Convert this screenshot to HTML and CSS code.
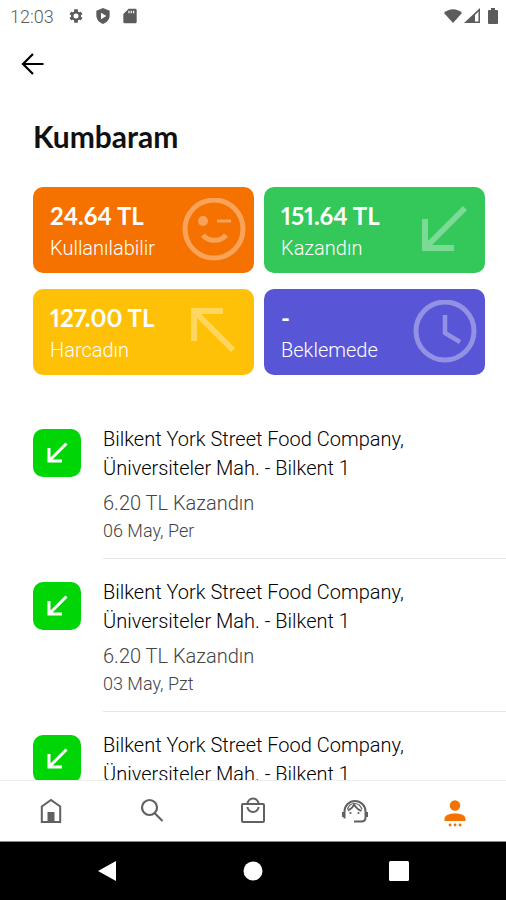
FILE: index.html
```html
<!DOCTYPE html>
<html lang="tr">
<head>
<meta charset="utf-8">
<meta name="viewport" content="width=device-width, initial-scale=1">
<title>Kumbaram</title>
<link rel="stylesheet" href="styles.css">
</head>
<body>
<svg class="sprite">
  <symbol id="arrow-in" viewBox="0 0 24 24"><path d="M21.500 2.500 4 20M4 7v13h13" fill="none" stroke="currentColor" stroke-width="3"/></symbol>
</svg>
<div class="screen">
  <div class="status">
    <span class="time">12:03</span>
    <svg class="status-icon" viewBox="0 0 24 24"><path fill="currentColor" fill-rule="evenodd" d="M19.400 13c.1-.7.1-1.300 0-2l2.200-1.700-2.200-3.800-2.600 1c-.5-.4-1.100-.7-1.700-1L14.700 2H9.300l-.4 3.500c-.6.300-1.200.6-1.700 1l-2.600-1-2.200 3.800L4.600 11c-.1.700-.1 1.300 0 2l-2.200 1.700 2.200 3.800 2.600-1c.5.4 1.100.7 1.700 1l.4 3.500h5.400l.4-3.500c.6-.3 1.200-.6 1.700-1l2.600 1 2.200-3.800zM12 15.800a3.800 3.800 0 1 1 0-7.600 3.800 3.800 0 0 1 0 7.600z"/></svg>
    <svg class="status-icon" viewBox="0 0 24 24"><path fill="currentColor" fill-rule="evenodd" d="M12 0 2 4V11c0 6 4 11 10 13 6-2 10-7 10-13V4zM9 7l8 5-8 5z"/></svg>
    <svg class="status-icon" viewBox="0 0 24 24"><path fill="currentColor" fill-rule="evenodd" d="M10 1h10a2 2 0 0 1 2 2v18a2 2 0 0 1-2 2H4a2 2 0 0 1-2-2V9zM9.500 4v4h1.800V4zM13 4v4h1.800V4zM16.500 4v4h1.800V4z"/></svg>
    <span class="spacer"></span>
    <svg class="wifi" viewBox="0 0 20 16"><path fill="currentColor" d="M1 5C6 0 14 0 19 5L10 15z"/></svg>
    <svg class="signal" viewBox="0 0 16 16"><path fill="currentColor" fill-rule="evenodd" d="M0 15 16 0v15zM11 7v6.500h3.500V3.500z"/></svg>
    <svg class="battery" viewBox="0 0 10 16"><path fill="currentColor" d="M3 0h4v2h2a1 1 0 0 1 1 1v12a1 1 0 0 1-1 1H1a1 1 0 0 1-1-1V3a1 1 0 0 1 1-1h2z"/></svg>
  </div>
  <main class="content">
    <button class="back" aria-label="Geri">
      <svg viewBox="0 0 24 24"><path d="M22.500 12H2.500M12 2 2 12l10 10" fill="none" stroke="currentColor" stroke-width="2.200"/></svg>
    </button>
    <h1>Kumbaram</h1>
    <section class="cards">
      <article class="card available">
        <div><strong>24.64 TL</strong><span>Kullanılabilir</span></div>
        <svg viewBox="0 0 64 64"><g fill="none" stroke="currentColor" stroke-width="5"><circle cx="32" cy="31" r="29"/><path d="M35 23h14" stroke-width="3"/><path d="M21 37c5 7 18 7 23 0"/></g><circle cx="21" cy="23" r="5" fill="currentColor"/></svg>
      </article>
      <article class="card earned">
        <div><strong>151.64 TL</strong><span>Kazandın</span></div>
        <svg viewBox="0 0 64 64"><path d="M52 10 13 49M12 21v29h29" fill="none" stroke="currentColor" stroke-width="6"/></svg>
      </article>
      <article class="card spent">
        <div><strong>127.00 TL</strong><span>Harcadın</span></div>
        <svg viewBox="0 0 64 64"><path d="M51 50 13 12M12 41V11h29" fill="none" stroke="currentColor" stroke-width="6"/></svg>
      </article>
      <article class="card pending">
        <div><strong>-</strong><span>Beklemede</span></div>
        <svg viewBox="0 0 64 64"><g fill="none" stroke="currentColor" stroke-width="5"><circle cx="32" cy="31" r="29"/><path d="M32 15v18l15 9" stroke-width="4.500"/></g></svg>
      </article>
    </section>
    <ul class="history">
      <li>
        <span class="badge"><svg><use href="#arrow-in"/></svg></span>
        <div class="entry"><h2>Bilkent York Street Food Company, Üniversiteler Mah. - Bilkent 1</h2><p>6.20 TL Kazandın</p><time>06 May, Per</time></div>
      </li>
      <li>
        <span class="badge"><svg><use href="#arrow-in"/></svg></span>
        <div class="entry"><h2>Bilkent York Street Food Company, Üniversiteler Mah. - Bilkent 1</h2><p>6.20 TL Kazandın</p><time>03 May, Pzt</time></div>
      </li>
      <li>
        <span class="badge"><svg><use href="#arrow-in"/></svg></span>
        <div class="entry"><h2>Bilkent York Street Food Company, Üniversiteler Mah. - Bilkent 1</h2></div>
      </li>
    </ul>
  </main>
  <nav class="tabs">
    <a href="#home" aria-label="Ana sayfa"><svg viewBox="0 0 28 28"><path d="M4.800 25V9.500L14 3l9.200 6.500V25z" fill="none" stroke="currentColor" stroke-width="2"/><path d="M10.500 15h7v10h-7z" fill="currentColor"/></svg></a>
    <a href="#search" aria-label="Ara"><svg viewBox="0 0 28 28"><g fill="none" stroke="currentColor" stroke-width="2.200"><circle cx="11.500" cy="10.500" r="7.500"/><path d="m16.500 16 8 8"/></g></svg></a>
    <a href="#orders" aria-label="Siparişler"><svg viewBox="0 0 28 28"><g fill="none" stroke="currentColor" stroke-width="2"><rect x="3" y="7" width="22" height="18" rx="1"/><path d="M8.500 7a5.500 5.500 0 0 1 11 0M8.500 10a5.500 5 0 0 0 11 0"/></g></svg></a>
    <a href="#support" aria-label="Destek"><svg viewBox="0 0 28 28"><g fill="none" stroke="currentColor" stroke-width="2"><path d="M4.500 21.500v-7a10.500 10.500 0 0 1 21 0v6q0 4-4 4H14"/><path d="M3 15v5M27 15v5"/><path d="M8 13.500q4.500-2 6-6 2.500 4.500 7.500 6.500" stroke-width="1.800"/><path d="M7.500 12.500Q9 6.500 14.500 6.500T22 12.500" stroke-width="1.200"/></g><circle cx="10.500" cy="16" r="1.100" fill="currentColor"/><circle cx="18.500" cy="16" r="1.100" fill="currentColor"/></svg></a>
    <a class="active" href="#profile" aria-label="Profil"><svg viewBox="0 0 28 28"><g fill="currentColor"><circle cx="14" cy="8.500" r="5.200"/><path d="M3.500 24v-2c0-4 5-5.500 10.500-5.500s10.500 1.500 10.500 5.500v2z"/><circle cx="9" cy="28" r="1.400"/><circle cx="14" cy="28" r="1.400"/><circle cx="19" cy="28" r="1.400"/></g></svg></a>
  </nav>
  <div class="system">
    <button aria-label="Geri"><svg viewBox="0 0 22 22"><path d="M2 11 20 1v20z" fill="currentColor"/></svg></button>
    <button aria-label="Ana ekran"><svg viewBox="0 0 22 22"><circle cx="11" cy="11" r="9.500" fill="currentColor"/></svg></button>
    <button aria-label="Son uygulamalar"><svg viewBox="0 0 22 22"><rect x="1" y="1" width="20" height="20" rx="1.500" fill="currentColor"/></svg></button>
  </div>
</div>
</body>
</html>
```
FILE: styles.css
```css
* { box-sizing: border-box; }
body { margin: 0; background: #fff; color: #000; font-family: Roboto, "Liberation Sans", sans-serif; }
h1, h2, p, ul { margin: 0; padding: 0; }
button { border: 0; padding: 0; background: none; color: inherit; display: flex; }
svg { flex: none; }
.sprite { display: none; }

.screen { height: 100vh; display: flex; flex-direction: column; overflow: hidden; }

.status { display: flex; align-items: center; height: 32px; padding: 0 8px 0 10px; color: #5c5c5c; flex: none; }
.time { font-size: 18px; font-weight: 300; width: 58px; }
.status-icon { width: 16px; height: 16px; margin-right: 11px; }
.spacer { flex: 1; }
.wifi { width: 20px; height: 16px; }
.signal { width: 16px; height: 16px; margin: 0 8px 0 1px; }
.battery { width: 10px; height: 16px; }

.content { flex: 1; min-height: 0; overflow: hidden; }
.back { margin: 20px 0 0 21px; color: #000; }
.back svg { width: 24px; height: 24px; }
h1 { margin: 40px 33px 0; font: 700 30px/40px Lato, "Open Sans", sans-serif; color: #111; }

.cards { display: grid; grid-template-columns: 1fr 1fr; gap: 16px 10px; padding: 31px 21px 31px 33px; }
.card { display: flex; align-items: center; justify-content: space-between; height: 86px; padding: 0 8px 0 17px; border-radius: 10px; color: #fff; }
.card div { padding-top: 4px; }
.card svg { width: 64px; height: 64px; opacity: .35; }
.card strong, .card span { display: block; line-height: 32px; }
.card strong { font-family: Lato, "Open Sans", sans-serif; font-size: 24px; font-variant-numeric: proportional-nums; }
.card span { font-size: 20px; font-weight: 300; }
.available { background: #f57200; }
.earned { background: #34c759; }
.spent { background: #ffc107; }
.pending { background: #5856d6; }

.history { list-style: none; padding-left: 33px; }
.history li { display: flex; gap: 22px; }
.badge { display: flex; align-items: center; justify-content: center; width: 48px; height: 48px; margin-top: 23px; border-radius: 10px; background: #00d505; color: #fff; flex: none; }
.badge svg { width: 24px; height: 24px; }
.entry { flex: 1; padding: 19px 0 13px; border-bottom: 1px solid #e6e6e6; }
h2 { max-width: 320px; font-size: 20px; font-weight: 300; line-height: 29px; }
.entry p { margin-top: 6px; font-size: 20px; font-weight: 300; line-height: 28px; color: #444; }
time { display: block; font-size: 18px; font-weight: 300; line-height: 28px; color: #444; }

.tabs { display: flex; height: 62px; border-top: 1px solid #eee; border-bottom: 1px solid #888; background: #fff; color: #616161; flex: none; }
.tabs a { flex: 1; display: flex; align-items: center; justify-content: center; color: inherit; }
.tabs svg { width: 28px; height: 28px; overflow: visible; }
.tabs .active { color: #f57200; }

.system { display: flex; align-items: center; justify-content: center; gap: 124px; height: 58px; background: #000; color: #fff; flex: none; }
.system svg { width: 22px; height: 22px; }
```
